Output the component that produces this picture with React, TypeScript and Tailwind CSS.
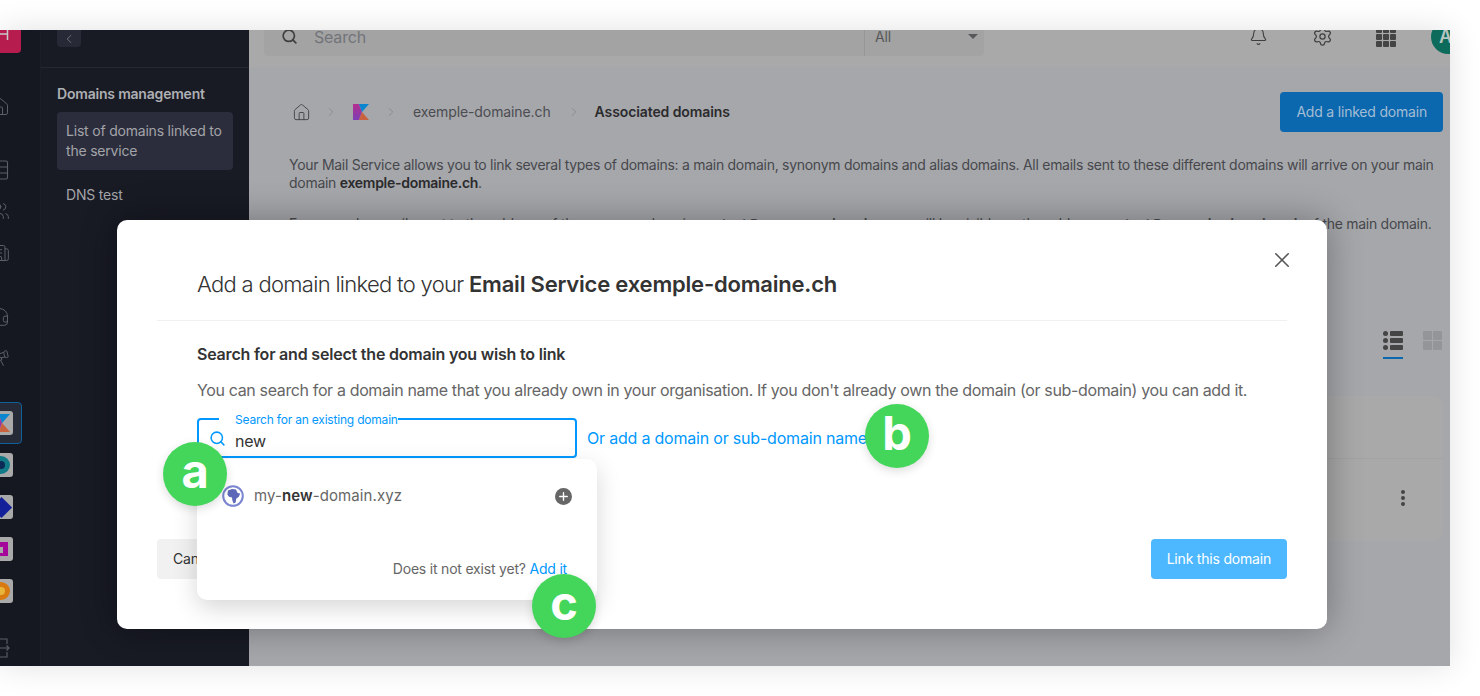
import { FC, ReactNode } from 'react'

// Icons
import {
  Bell,
  Building2,
  ChevronLeft,
  ChevronRight,
  Headset,
  House,
  Plus,
  Search,
  Settings,
  Telescope,
  Users,
  X
} from 'lucide-react'

const KLogo: FC<{ size?: number }> = ({ size = 18 }) => (
  <svg width={size} height={size} viewBox="0 0 16 16">
    <defs>
      <linearGradient id="kleft" x1="0" y1="0" x2="0" y2="1">
        <stop offset="0" stopColor="#b52f8f" />
        <stop offset="1" stopColor="#7c3fb5" />
      </linearGradient>
    </defs>
    <path d="M0 0h6l3 8-3 8H0z" fill="url(#kleft)" />
    <path d="M6 0h10L9 8z" fill="#0a86d0" />
    <path d="M9 8l7 8H6z" fill="#c9623f" />
  </svg>
)

const GlobeIcon: FC = () => (
  <svg width="22" height="22" viewBox="0 0 22 22" className="shrink-0">
    <circle cx="11" cy="11" r="9.8" fill="#fff" stroke="#7b85d0" strokeWidth="2" />
    <path
      d="M6 5.5l4-1.6 4 .6 1.6 3.6 2.6.3-1.4 3.4-2.6 2-.6 3.6-2 1.2-1.2-3-.4-3.2-3-.6-1.6-2.4z"
      fill="#5d68b8"
    />
  </svg>
)

const ServerIcon: FC = () => (
  <svg width="20" height="20" viewBox="0 0 20 20" fill="none" stroke="currentColor" strokeWidth="1.1">
    <rect x="3.5" y="1" width="14" height="18" rx="1.5" />
    <path d="M3.5 7h14M3.5 13h14" />
    <path d="M6 4h2M6 10h2M6 16h2" />
  </svg>
)

const LogoutIcon: FC = () => (
  <svg width="20" height="20" viewBox="0 0 20 20" fill="none" stroke="currentColor" strokeWidth="1.1">
    <path d="M5 1h12v5M17 14v5H5" />
    <path d="M10 10h9M16.5 7.5 19 10l-2.5 2.5" />
  </svg>
)

const AppTile: FC<{ children: ReactNode }> = ({ children }) => (
  <div className="flex h-6 w-6 items-center justify-center overflow-hidden rounded-[3px] bg-[#a9a9a9]">
    {children}
  </div>
)

const Badge: FC<{ letter: string; className: string }> = ({ letter, className }) => (
  <div
    className={`absolute flex h-16 w-16 items-center justify-center rounded-full bg-[#43d65a] pb-[5px] text-[47px] font-bold text-white shadow-[0_3px_10px_rgba(0,0,0,0.14)] ${className}`}
  >
    {letter}
  </div>
)

const Rail: FC = () => (
  <aside className="flex h-full w-[41px] shrink-0 flex-col border-r border-[#1b1d29] bg-[#161821] text-[#5d5f68]">
    <div className="-ml-[22px] flex h-[23px] w-[43px] shrink-0 items-start rounded-b-[4px] bg-[#b61d4e] pl-[22px]">
      <svg width="10" height="12" viewBox="0 0 10 12" className="text-[#c9c9cc]" fill="none" stroke="currentColor" strokeWidth="1.5">
        <path d="M0 4h7M7.5 0v10" />
      </svg>
    </div>
    <div className="-ml-[10px] flex w-[20px] flex-col items-center">
      <House size={20} strokeWidth={1.2} className="mt-[44px] shrink-0" />
      <div className="mt-[43px]">
        <ServerIcon />
      </div>
      <Users size={20} strokeWidth={1.2} className="mt-[21px] shrink-0" />
      <Building2 size={20} strokeWidth={1.2} className="mt-[22px] shrink-0" />
      <Headset size={20} strokeWidth={1.2} className="mt-[44px] shrink-0" />
      <Telescope size={20} strokeWidth={1.2} className="mt-[21px] shrink-0" />
    </div>
    <div className="-ml-[20px] mt-[34px] flex w-[42px] flex-col items-center">
      <div className="flex h-[42px] w-[42px] items-center justify-center rounded-[4px] border border-[#0f5f99] bg-[#262936]">
        <AppTile>
          <KLogo size={18} />
        </AppTile>
      </div>
      <div className="mt-[9px]">
        <AppTile>
          <div className="h-[18px] w-[18px] rounded-full border-[5px] border-[#127a86] bg-[#0c2a55]" />
        </AppTile>
      </div>
      <div className="mt-[18px]">
        <AppTile>
          <div className="h-[15px] w-[15px] rotate-45 bg-[#14209a]" />
        </AppTile>
      </div>
      <div className="mt-[18px]">
        <AppTile>
          <div className="h-[14px] w-[14px] border-t-[5px] border-r-[5px] border-b-[3px] border-[#a5079b]" />
        </AppTile>
      </div>
      <div className="mt-[18px]">
        <AppTile>
          <div className="h-[18px] w-[18px] rounded-full border-[5px] border-[#d87a10] bg-[#e7b53a]" />
        </AppTile>
      </div>
    </div>
    <div className="-ml-[10px] mt-[35px]">
      <LogoutIcon />
    </div>
  </aside>
)

const Sidebar: FC = () => (
  <aside className="h-full w-[208px] shrink-0 bg-[#181a24]">
    <div className="h-[38px] border-b border-[#252733] pl-4">
      <div className="flex h-[17px] w-6 items-center justify-center rounded-b-[4px] bg-[#272936] text-[#7b7c84]">
        <ChevronLeft size={14} strokeWidth={1.5} />
      </div>
    </div>
    <div className="px-4 pt-[17px]">
      <div className="text-sm leading-[18px] font-semibold text-[#aeafb3]">Domains management</div>
      <div className="mt-[9px] rounded-[4px] bg-[#2b2d3c] px-[9px] py-[9px] text-sm leading-[20px] text-[#a3a4a9]">
        List of domains linked to the service
      </div>
      <div className="mt-[15px] px-[9px] text-sm leading-[20px] text-[#a3a4a9]">DNS test</div>
    </div>
  </aside>
)

const TopBar: FC = () => (
  <header className="flex h-[37px] shrink-0 items-end overflow-hidden bg-[#a9a9a9] pb-[11px] pl-[15px]">
    <div className="flex h-[39px] w-[720px] shrink-0 items-center rounded-b-[4px] bg-[#a3a3a3] pl-[17px] text-[#3f3f40]">
      <Search size={17} strokeWidth={2.4} className="shrink-0" />
      <span className="ml-[16px] text-base text-[#72747a]">Search</span>
      <div className="ml-auto flex h-full w-[120px] items-center justify-between border-l border-[#969696] pr-[6px] pl-[10px] text-sm text-[#57585a]">
        All
        <span className="h-0 w-0 border-x-[5px] border-t-[5px] border-x-transparent border-t-[#57585a]" />
      </div>
    </div>
    <div className="ml-[265px] flex h-[39px] shrink-0 items-center text-[#3f3f40]">
      <Bell size={19} strokeWidth={1.4} className="shrink-0" />
      <Settings size={21} strokeWidth={1.4} className="ml-[44px] shrink-0" />
      <div className="ml-[43px] grid shrink-0 grid-cols-3 gap-[1px]">
        {Array.from({ length: 9 }).map((_, i) => (
          <span key={i} className="h-[6px] w-[6px] rounded-[1px] bg-[#444]" />
        ))}
      </div>
      <div className="ml-[35px] flex h-[34px] w-[34px] shrink-0 items-center rounded-full bg-[#0d6b5c] pl-[8px] text-lg font-semibold text-[#b7c4c0]">
        A
      </div>
    </div>
  </header>
)

const MainContent: FC = () => (
  <main className="flex-1 bg-[#a6a7ab] pt-[25px] pr-[7px] pl-[40px]">
    <div className="flex h-10 items-center text-sm tracking-[-0.1px] text-[#4b4c50]">
      <House size={19} strokeWidth={1.2} className="ml-[3px] text-[#45464a]" />
      <ChevronRight size={14} strokeWidth={1} className="mx-[13px] text-[#77787c]" />
      <div className="ml-[2px]">
        <KLogo size={16} />
      </div>
      <ChevronRight size={14} strokeWidth={1} className="mx-[15px] text-[#77787c]" />
      <span>exemple-domaine.ch</span>
      <ChevronRight size={14} strokeWidth={1} className="mr-[14px] ml-[16px] text-[#77787c]" />
      <span className="font-semibold text-[#2b2b2d]">Associated domains</span>
      <button className="ml-auto h-10 rounded-[4px] bg-[#0b67ae] px-4 text-sm tracking-[-0.2px] text-[#a3bdd4]">
        Add a linked domain
      </button>
    </div>
    <div className="mt-[24px] w-[1155px] text-sm leading-[18px] tracking-[-0.28px] text-[#47484c]">
      <p>
        Your Mail Service allows you to link several types of domains: a main domain, synonym domains and alias
        domains. All emails sent to these different domains will arrive on your main domain{' '}
        <strong className="font-semibold text-[#2b2b2d]">exemple-domaine.ch</strong>.
      </p>
      <p className="mt-[23px] whitespace-nowrap">
        For example, emails sent to the address of the synonym domain{' '}
        <strong className="font-semibold">contact@synonym-domaine.xyz</strong> will be visible on the address{' '}
        <strong className="font-semibold">contact@exemple-domaine.ch</strong> of the main domain.
      </p>
    </div>
    <div className="mt-[98px] flex justify-end pr-px">
      <div className="flex flex-col items-center">
        <div className="grid w-5 gap-[2px]">
          {[0, 1, 2].map(i => (
            <div key={i} className="flex gap-[2px]">
              <span className="h-[5px] w-[5px] rounded-full bg-[#444]" />
              <span className="h-[5px] flex-1 rounded-[1px] bg-[#444]" />
            </div>
          ))}
        </div>
        <span className="mt-[7px] h-[2px] w-5 bg-[#0b67ae]" />
      </div>
      <div className="ml-[20px] grid h-[19px] w-[19px] grid-cols-2 gap-[1px]">
        {[0, 1, 2, 3].map(i => (
          <span key={i} className="rounded-[1px] bg-[#949599]" />
        ))}
      </div>
    </div>
    <div className="mt-[37px] h-[145px] rounded-[10px] bg-[#a9a9a9]">
      <div className="h-[63px] border-b border-[#a3a3a3]" />
      <div className="flex justify-end pt-[31px] pr-[38px]">
        <div className="grid gap-[2px]">
          <span className="h-1 w-1 rounded-full bg-[#444]" />
          <span className="h-1 w-1 rounded-full bg-[#444]" />
          <span className="h-1 w-1 rounded-full bg-[#444]" />
        </div>
      </div>
    </div>
  </main>
)

const DomainDropdown: FC = () => (
  <div className="absolute top-[239px] left-[80px] h-[141px] w-[400px] rounded-[10px] bg-white shadow-[0_8px_24px_rgba(0,0,0,0.16)]">
    <div className="flex items-center px-[25px] pt-[26px]">
      <GlobeIcon />
      <span className="ml-[10px] text-[15px] tracking-[0.1px] text-[#666]">
        my-<b className="font-semibold text-[#333]">new</b>-domain.xyz
      </span>
      <span className="ml-auto flex h-[17px] w-[17px] items-center justify-center rounded-full bg-[#666] text-white">
        <Plus size={13} strokeWidth={2.5} />
      </span>
    </div>
    <div className="mt-[51px] pr-[30px] text-right text-sm text-[#666]">
      Does it not exist yet? <span className="text-[#0098ff]">Add it</span>
    </div>
  </div>
)

const LinkDialog: FC = () => (
  <div className="absolute top-[190px] left-[117px] h-[409px] w-[1210px] rounded-[10px] bg-white shadow-[0_0_36px_rgba(0,0,0,0.32)]">
    <button className="absolute top-[30px] right-[35px] text-[#555]">
      <X size={20} strokeWidth={1.5} className="scale-125" />
    </button>
    <div className="mx-10 border-b border-[#f0f0f0] px-10 pt-[49px] pb-[21px] text-[22px] leading-[30px] font-light tracking-[-0.7px] whitespace-nowrap text-[#333]">
      Add a domain linked to your <b className="font-semibold tracking-[-0.2px]">Email Service exemple-domaine.ch</b>
    </div>
    <div className="px-20 pt-[22px]">
      <h3 className="text-base leading-[22px] font-semibold text-[#333]">Search for and select the domain you wish to link</h3>
      <p className="mt-[14px] text-base leading-[22px] tracking-[-0.36px] whitespace-nowrap text-[#666]">
        You can search for a domain name that you already own in your organisation. If you don&apos;t already own the
        domain (or sub-domain) you can add it.
      </p>
      <div className="mt-[17px] flex items-center">
        <div className="relative flex h-10 w-[380px] items-center rounded-[4px] border-2 border-[#0098ff] pl-[10px]">
          <span className="absolute -top-[7px] left-[20px] bg-white pl-[16px] text-xs leading-[14px] text-[#0098ff]">
            Search for an existing domain
          </span>
          <Search size={17} strokeWidth={2.2} className="shrink-0 text-[#0098ff]" />
          <span className="mt-[5px] ml-[9px] text-base text-[#333]">new</span>
        </div>
        <span className="ml-[10px] text-base whitespace-nowrap text-[#0098ff]">Or add a domain or sub-domain name</span>
      </div>
    </div>
    <div className="absolute right-10 bottom-[50px] left-10 flex justify-between">
      <button className="h-10 rounded-[4px] bg-[#f1f1f1] px-4 text-sm text-[#333]">Cancel</button>
      <button className="h-10 rounded-[4px] bg-[#4db8ff] px-4 text-sm text-white">Link this domain</button>
    </div>
    <DomainDropdown />
  </div>
)

export default function App() {
  return (
    <div className="relative h-[696px] w-[1480px] overflow-hidden bg-white pt-[30px] font-['Inter',sans-serif] tracking-[-0.2px]">
      <div className="relative flex h-[636px] w-[1450px] overflow-hidden shadow-[0_0_30px_rgba(0,0,0,0.12)]">
        <Rail />
        <Sidebar />
        <div className="flex h-full min-w-0 flex-1 flex-col">
          <TopBar />
          <MainContent />
        </div>
        <LinkDialog />
      </div>
      <Badge letter="a" className="top-[442px] left-[163px]" />
      <Badge letter="b" className="top-[404px] left-[865px]" />
      <Badge letter="c" className="top-[574px] left-[532px]" />
    </div>
  )
}
